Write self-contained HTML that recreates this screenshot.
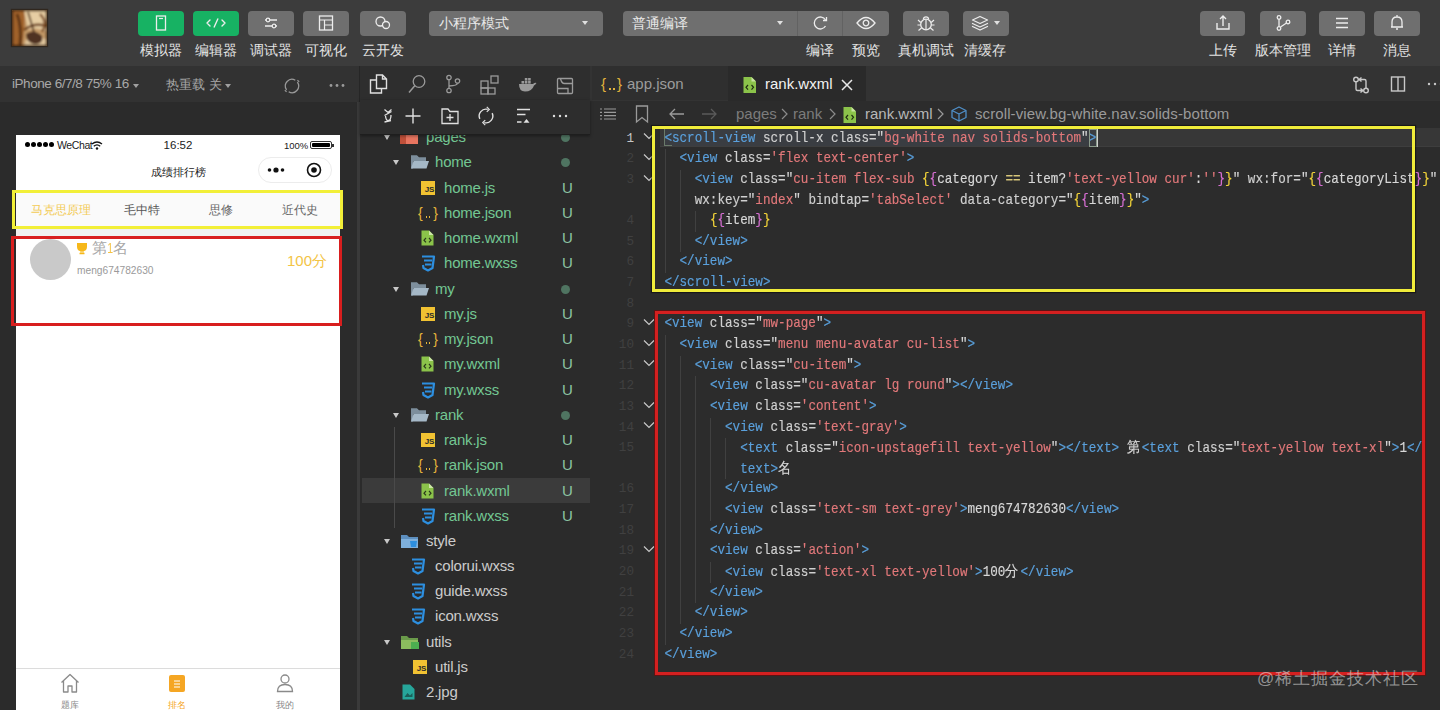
<!DOCTYPE html>
<html><head><meta charset="utf-8">
<style>
*{margin:0;padding:0;box-sizing:border-box}
html,body{width:1440px;height:710px;overflow:hidden;background:#2b2b2b;font-family:"Liberation Sans",sans-serif;position:relative}
.a{position:absolute}
svg{position:absolute;overflow:visible}
#top{left:0;top:0;width:1440px;height:66px;background:#3c3c3c}
.btn{position:absolute;top:11px;height:25px;border-radius:4px;background:#6f6f6f}
.btn.g{background:#17b263}
.lbl{position:absolute;top:41px;font-size:14px;color:#e4e4e4;white-space:nowrap;text-align:center;width:80px;line-height:18px}
.dd{position:absolute;top:11px;height:25px;border-radius:4px;background:#6f6f6f;color:#e8e8e8;font-size:14px;line-height:25px}
.tri{position:absolute;width:0;height:0;border-left:4px solid transparent;border-right:4px solid transparent;border-top:5px solid #e0e0e0}
#row2{left:0;top:66px;width:1440px;height:36px;background:#323232}
</style></head><body>
<div id="top" class="a"></div>
<div id="row2" class="a"></div>
<div class="a" style="left:12px;top:10px;width:35px;height:36px;overflow:hidden;background:#c9a273;box-shadow:0 0 1px 1px rgba(40,25,10,0.6)">
<svg width="35" height="36" style="left:0;top:0"><defs><filter id="bl"><feGaussianBlur stdDeviation="1.2"/></filter></defs><g filter="url(#bl)">
<rect x="-2" y="-2" width="39" height="40" fill="#c49a68"/>
<path d="M12 0 H36 V22 Q26 16 16 20 Z" fill="#e6cda3"/>
<path d="M14 30 Q24 24 36 30 V38 H12 Z" fill="#e2c89f"/>
<path d="M-2 0 H12 Q14 14 10 38 H-2 Z" fill="#a0622c"/>
<path d="M5 4 Q10 16 8 36" stroke="#5e3412" stroke-width="3" fill="none"/>
<path d="M14 24 Q22 18 30 26 Q32 34 22 34 Q14 32 14 24 Z" fill="#4f3120"/>
<path d="M12 20 Q22 12 34 16" stroke="#6d3f1a" stroke-width="2.5" fill="none"/>
<path d="M16 2 L22 22" stroke="#4a2a12" stroke-width="1.6" fill="none"/>
<path d="M28 4 Q36 12 30 22" stroke="#7a4a22" stroke-width="2.2" fill="none"/>
<rect x="0" y="0" width="35" height="36" fill="none" stroke="#3a2410" stroke-width="2.5"/>
</g></svg></div>
<div class="btn g" style="left:138px;width:46px"></div><svg width="1" height="1" style="left:161.0px;top:23px"><rect x="-4.5" y="-7" width="9" height="14" fill="none" stroke="#ededed" stroke-width="1.3"/><line x1="-2" y1="-4.5" x2="2" y2="-4.5" stroke="#ededed" stroke-width="1.2"/></svg><div class="lbl" style="left:121.0px">模拟器</div><div class="btn g" style="left:193px;width:46px"></div><svg width="1" height="1" style="left:216.0px;top:23px"><path d="M-6 -3 L-9 0 L-6 3 M6 -3 L9 0 L6 3 M1.8 -4 L-1.8 4" fill="none" stroke="#ededed" stroke-width="1.4" stroke-linecap="round" stroke-linejoin="round"/></svg><div class="lbl" style="left:176.0px">编辑器</div><div class="btn" style="left:248px;width:46px"></div><svg width="1" height="1" style="left:271.0px;top:23px"><path d="M-6 -3 H6 M-6 3 H6" stroke="#ededed" stroke-width="1.3"/><circle cx="-3" cy="-3" r="1.8" fill="#6f6f6f" stroke="#ededed" stroke-width="1.2"/><circle cx="3" cy="3" r="1.8" fill="#6f6f6f" stroke="#ededed" stroke-width="1.2"/></svg><div class="lbl" style="left:231.0px">调试器</div><div class="btn" style="left:303px;width:46px"></div><svg width="1" height="1" style="left:326.0px;top:23px"><rect x="-6.5" y="-7" width="13" height="14" fill="none" stroke="#ededed" stroke-width="1.3"/><path d="M-6.5 -3 H6.5 M-1.5 -3 V7 M-1.5 2 H6.5" stroke="#ededed" stroke-width="1.2" fill="none"/></svg><div class="lbl" style="left:286.0px">可视化</div><div class="btn" style="left:360px;width:46px"></div><svg width="1" height="1" style="left:383.0px;top:23px"><circle cx="-2.5" cy="-1.5" r="4.5" fill="none" stroke="#ededed" stroke-width="1.3"/><circle cx="3" cy="2" r="3.5" fill="#6f6f6f" stroke="#ededed" stroke-width="1.3"/></svg><div class="lbl" style="left:343.0px">云开发</div><div class="btn" style="left:903px;width:46px"></div><svg width="1" height="1" style="left:926.0px;top:23px"><circle cx="0" cy="1.5" r="5.3" fill="none" stroke="#ededed" stroke-width="1.3"/><path d="M-2.6 -3.6 A2.6 2.6 0 0 1 2.6 -3.6" fill="none" stroke="#ededed" stroke-width="1.3"/><path d="M0 -3.5 V6.8 M-5.2 -0.5 L-8 -3 M5.2 -0.5 L8 -3 M-5.3 2 H-8.5 M5.3 2 H8.5 M-4.5 5 L-7.5 7.5 M4.5 5 L7.5 7.5" stroke="#ededed" stroke-width="1.2" fill="none"/></svg><div class="lbl" style="left:886.0px">真机调试</div><div class="btn" style="left:1200px;width:45px"></div><svg width="1" height="1" style="left:1222.5px;top:23px"><path d="M-6 0 V6 H6 V0" fill="none" stroke="#ededed" stroke-width="1.4"/><path d="M0 3 V-7 M-3 -4 L0 -7 L3 -4" fill="none" stroke="#ededed" stroke-width="1.4"/></svg><div class="lbl" style="left:1182.5px">上传</div><div class="btn" style="left:1260px;width:46px"></div><svg width="1" height="1" style="left:1283.0px;top:23px"><circle cx="-4" cy="-5.5" r="1.8" fill="none" stroke="#ededed" stroke-width="1.3"/><circle cx="-4" cy="5.5" r="1.8" fill="none" stroke="#ededed" stroke-width="1.3"/><circle cx="5" cy="-1" r="1.8" fill="none" stroke="#ededed" stroke-width="1.3"/><path d="M-4 -3.7 V3.7 M-2.5 4 L3.5 0" stroke="#ededed" stroke-width="1.3"/></svg><div class="lbl" style="left:1243.0px">版本管理</div><div class="btn" style="left:1319px;width:46px"></div><svg width="1" height="1" style="left:1342.0px;top:23px"><path d="M-6 -4.5 H6 M-6 0 H6 M-6 4.5 H6" stroke="#ededed" stroke-width="1.3"/></svg><div class="lbl" style="left:1302.0px">详情</div><div class="btn" style="left:1374px;width:46px"></div><svg width="1" height="1" style="left:1397.0px;top:23px"><path d="M-5 4 V-1 Q-5 -6 0 -6 Q5 -6 5 -1 V4 Z M-6 4 H6 M-1 6 H1 M0 -6 V-8" fill="none" stroke="#ededed" stroke-width="1.3"/></svg><div class="lbl" style="left:1357.0px">消息</div><div class="btn" style="left:963px;width:46px"></div><svg width="1" height="1" style="left:980px;top:23px"><path d="M0 -6.5 L7.5 -3 L0 0.5 L-7.5 -3 Z" fill="none" stroke="#ededed" stroke-width="1.3" stroke-linejoin="round"/><path d="M-7.5 0.5 L0 4 L7.5 0.5 M-7.5 3.5 L0 7 L7.5 3.5" fill="none" stroke="#ededed" stroke-width="1.3" stroke-linejoin="round" stroke-linecap="round"/></svg><div class="tri" style="left:994px;top:21px;border-left-width:3px;border-right-width:3px;border-top-width:4px"></div><div class="lbl" style="left:945px">清缓存</div><div class="dd" style="left:429px;width:174px;padding-left:10px">小程序模式</div><div class="tri" style="left:582px;top:21px;border-left-width:3px;border-right-width:3px;border-top-width:4px"></div><div class="dd" style="left:623px;width:266px;padding-left:9px">普通编译</div><div class="a" style="left:797px;top:11px;width:1px;height:25px;background:#626262"></div><div class="a" style="left:842px;top:11px;width:1px;height:25px;background:#626262"></div><div class="tri" style="left:777px;top:21px;border-left-width:3px;border-right-width:3px;border-top-width:4px"></div><svg width="1" height="1" style="left:820px;top:23px"><path d="M5.5 -3 A6 6 0 1 0 5.5 3" fill="none" stroke="#ededed" stroke-width="1.3"/><path d="M6.5 -6 V-2.5 H3" fill="none" stroke="#ededed" stroke-width="1.3"/></svg><svg width="1" height="1" style="left:866px;top:23px"><path d="M-9 0 Q0 -11 9 0 Q0 11 -9 0 Z" fill="none" stroke="#ededed" stroke-width="1.3"/><circle cx="0" cy="0" r="2.8" fill="none" stroke="#ededed" stroke-width="1.3"/></svg><div class="lbl" style="left:780px">编译</div><div class="lbl" style="left:826px">预览</div><div class="a" style="left:0;top:102px;width:357px;height:608px;background:#2b2b2b"></div><div class="a" style="left:12px;top:76px;font-size:13.5px;letter-spacing:-0.45px;color:#a9a9a9;white-space:nowrap;line-height:16px">iPhone 6/7/8 75% 16</div><div class="tri" style="left:133px;top:84px;border-left-width:3px;border-right-width:3px;border-top-width:4px;border-top-color:#a0a0a0"></div><div class="a" style="left:166px;top:77px;font-size:12.8px;color:#a9a9a9;white-space:nowrap;line-height:16px">热重载 关</div><div class="tri" style="left:225px;top:84px;border-left-width:3px;border-right-width:3px;border-top-width:4px;border-top-color:#a0a0a0"></div><svg width="1" height="1" style="left:291.5px;top:85.5px"><path d="M3.30 -5.72 A6.6 6.6 0 0 0 -5.41 3.79 M-3.30 5.72 A6.6 6.6 0 0 0 5.41 -3.79" fill="none" stroke="#9a9a9a" stroke-width="1.3"/><path d="M-7.21 4.29 L-5.41 5.79 M7.21 -4.29 L5.41 -5.79" fill="none" stroke="#9a9a9a" stroke-width="1.1"/></svg><svg width="1" height="1" style="left:337px;top:85px"><circle cx="-6" cy="0.5" r="1.4" fill="#9a9a9a"/><circle cx="0" cy="0.5" r="1.4" fill="#9a9a9a"/><circle cx="6" cy="0.5" r="1.4" fill="#9a9a9a"/></svg><div class="a" style="left:357px;top:102px;width:3px;height:608px;background:#3a3a3a"></div><div class="a" style="left:359px;top:66px;width:1px;height:36px;background:#262626"></div><div class="a" style="left:360px;top:66px;width:230px;height:644px;background:#2b2b2b"></div><div class="a" style="left:360px;top:66px;width:230px;height:34px;background:#2e2e2e"></div><div class="a" style="left:360px;top:100px;width:230px;height:35px;background:#2d2d2d;border-bottom:1px solid #1e1e1e;box-shadow:0 1px 3px rgba(0,0,0,0.4);z-index:2"></div><svg width="1" height="1" style="left:379px;top:84px"><path d="M-2.5 -9 H3.5 L7.5 -5 V4.5 H-2.5 Z M3.5 -9 V-5 H7.5" fill="none" stroke="#e0e0e0" stroke-width="1.4"/><path d="M-2.5 -4 H-8.5 V9 H2.5 V4.5" fill="none" stroke="#e0e0e0" stroke-width="1.4"/></svg><svg width="1" height="1" style="left:417px;top:84px"><circle cx="2" cy="-2.5" r="5.8" fill="none" stroke="#9a9a9a" stroke-width="1.3"/><path d="M-2 1.5 L-8 8.5" stroke="#9a9a9a" stroke-width="1.5"/></svg><svg width="1" height="1" style="left:453px;top:84px"><circle cx="-4" cy="-6.5" r="2.2" fill="none" stroke="#9a9a9a" stroke-width="1.3"/><circle cx="-4" cy="6.5" r="2.2" fill="none" stroke="#9a9a9a" stroke-width="1.3"/><circle cx="4.5" cy="-3" r="2.2" fill="none" stroke="#9a9a9a" stroke-width="1.3"/><path d="M-4 -4.3 V4.3 M4.5 -0.8 Q4.5 1.5 -4 2" fill="none" stroke="#9a9a9a" stroke-width="1.3"/></svg><svg width="1" height="1" style="left:489px;top:84px"><rect x="-8" y="-3" width="7" height="7" fill="none" stroke="#9a9a9a" stroke-width="1.3"/><rect x="-8" y="4" width="7" height="6" fill="none" stroke="#9a9a9a" stroke-width="1.3"/><rect x="-1" y="4" width="7" height="6" fill="none" stroke="#9a9a9a" stroke-width="1.3"/><rect x="2" y="-8" width="7" height="7" fill="none" stroke="#9a9a9a" stroke-width="1.3"/></svg><svg width="1" height="1" style="left:526.5px;top:84.5px"><path d="M-8 -1 H6 Q8 -3 9.5 -2 Q8 0 7 0.5 Q5 6.5 -2 6.5 Q-8 6.5 -8 -1 Z" fill="#9a9a9a"/><rect x="-5.5" y="-4" width="2.6" height="2.6" fill="#9a9a9a"/><rect x="-2.2" y="-4" width="2.6" height="2.6" fill="#9a9a9a"/><rect x="1.1" y="-4" width="2.6" height="2.6" fill="#9a9a9a"/><rect x="-2.2" y="-7" width="2.6" height="2.6" fill="#9a9a9a"/><rect x="1.1" y="-7" width="2.6" height="2.6" fill="#9a9a9a"/></svg><svg width="1" height="1" style="left:565px;top:85.5px"><rect x="-7.5" y="-7.5" width="15" height="15" rx="1" fill="none" stroke="#9a9a9a" stroke-width="1.3"/><path d="M-4.5 -7.5 Q-3.5 -2.5 -0.5 -2.5 H7.5 M-7.5 2.5 H3 V7.5" fill="none" stroke="#9a9a9a" stroke-width="1.3"/></svg><svg width="1" height="1" style="left:388px;top:115.5px;z-index:3"><path d="M-3.5 -6.5 L0 -3.5 L3.5 -6.5 M-3.5 -0.5 L3.5 -4.5 M-2.5 0 Q-2 5 0.5 4.5 Q3 4 3 -1 M-3.5 6 L3 4.5" fill="none" stroke="#e0e0e0" stroke-width="1.3"/></svg><svg width="1" height="1" style="left:413px;top:115.5px;z-index:3"><path d="M-7.5 0 H7.5 M0 -7.5 V7.5" stroke="#e0e0e0" stroke-width="1.4"/></svg><svg width="1" height="1" style="left:449.5px;top:115.5px;z-index:3"><path d="M-8 -7 H-2 L0 -4.5 H8 V7.5 H-8 Z" fill="none" stroke="#e0e0e0" stroke-width="1.3"/><path d="M-3.5 1.5 H3.5 M0 -2 V5" stroke="#e0e0e0" stroke-width="1.3"/></svg><svg width="1" height="1" style="left:486px;top:115.5px;z-index:3"><path d="M1.76 -6.57 A6.8 6.8 0 0 0 -6.16 2.87 M-1.76 6.57 A6.8 6.8 0 0 0 6.16 -2.87" fill="none" stroke="#e0e0e0" stroke-width="1.4"/><path d="M0.76 -9.07 L3.26 -6.57 L0.76 -4.07 M-0.76 4.07 L-3.26 6.57 L-0.76 9.07" fill="none" stroke="#e0e0e0" stroke-width="1.2"/></svg><svg width="1" height="1" style="left:522.5px;top:115.5px;z-index:3"><path d="M-6 -6.5 H7 M-6 -1.5 H2.5 M-6 6 H-1.5" stroke="#e0e0e0" stroke-width="1.3"/><path d="M0.5 6.8 L3.5 3 L6.5 6.8 Z" fill="#e0e0e0"/></svg><svg width="1" height="1" style="left:559.5px;top:115.5px;z-index:3"><circle cx="-6" cy="0" r="1.2" fill="#e0e0e0"/><circle cx="0" cy="0" r="1.2" fill="#e0e0e0"/><circle cx="6" cy="0" r="1.2" fill="#e0e0e0"/></svg><div class="a" style="left:362px;top:477.5px;width:228px;height:25.5px;background:#3b3b3b"></div><div class="a" style="left:394px;top:427px;width:1px;height:101px;background:#4a4a4a"></div><div class="tri" style="left:384px;top:135px;border-left-width:3.5px;border-right-width:3.5px;border-top-width:5px;border-top-color:#c8c8c8"></div><svg width="1" height="1" style="left:400px;top:137px"><path d="M0 -6 H6 L8 -4 H18 V7 H0 Z" fill="#c0503a"/><rect x="6" y="-2" width="12" height="9" fill="#e87560"/></svg><div class="a" style="left:426px;top:127px;font-size:15px;letter-spacing:-0.2px;line-height:20px;color:#73c793;white-space:nowrap">pages</div><div class="a" style="left:561px;top:132.5px;width:9px;height:9px;border-radius:5px;background:#4f7461"></div><div class="tri" style="left:393px;top:160px;border-left-width:3.5px;border-right-width:3.5px;border-top-width:5px;border-top-color:#c8c8c8"></div><svg width="1" height="1" style="left:411px;top:162px"><path d="M0 -6.5 H6 L8 -4.5 H15 V-1 H0 Z" fill="#7d8e9c"/><path d="M0 -6.5 V6.5 H2 V-1.5 H15 V-4.5 H8 L6 -6.5 Z" fill="#7d8e9c"/><path d="M2.5 -1 H18 L15.5 6.5 H0 Z" fill="#a5b8c7"/></svg><div class="a" style="left:435px;top:152px;font-size:15px;letter-spacing:-0.2px;line-height:20px;color:#73c793;white-space:nowrap">home</div><div class="a" style="left:561px;top:157.5px;width:9px;height:9px;border-radius:5px;background:#4f7461"></div><div class="a" style="left:421px;top:180.5px;width:14px;height:14px;background:#f1c232;font-size:8px;font-weight:bold;color:#2a2a2a;line-height:18px;text-align:right;padding-right:1px;letter-spacing:-0.3px;font-family:Liberation Sans">JS</div><div class="a" style="left:444px;top:177.5px;font-size:15px;letter-spacing:-0.2px;line-height:20px;color:#73c793;white-space:nowrap">home.js</div><div class="a" style="left:562px;top:177.5px;font-size:15px;line-height:20px;color:#8cc3a2">U</div><div class="a" style="left:418px;top:204px;width:20px;height:18px;font-size:14px;color:#e5b53b;line-height:18px;white-space:nowrap;display:flex;justify-content:space-between"><span>{</span><span>}</span></div><div class="a" style="left:425.5px;top:216px;width:1.6px;height:1.6px;background:#e5b53b"></div><div class="a" style="left:428.5px;top:216px;width:1.6px;height:1.6px;background:#e5b53b"></div><div class="a" style="left:444px;top:203px;font-size:15px;letter-spacing:-0.2px;line-height:20px;color:#73c793;white-space:nowrap">home.json</div><div class="a" style="left:562px;top:203px;font-size:15px;line-height:20px;color:#8cc3a2">U</div><svg width="1" height="1" style="left:421px;top:238px"><path d="M0.5 -7.5 H8 L12.5 -3 V7.5 H0.5 Z" fill="#8bc34a"/><path d="M8 -7.5 V-3 H12.5" fill="#cde6a8"/><path d="M5 0 L3 2.2 L5 4.4 M8 0 L10 2.2 L8 4.4" fill="none" stroke="#2a3a1a" stroke-width="1.2"/></svg><div class="a" style="left:444px;top:228px;font-size:15px;letter-spacing:-0.2px;line-height:20px;color:#73c793;white-space:nowrap">home.wxml</div><div class="a" style="left:562px;top:228px;font-size:15px;line-height:20px;color:#8cc3a2">U</div><svg width="1" height="1" style="left:421px;top:263px"><path d="M1 -6.5 H13 L11.5 5 L7 7.5 L2.5 5 L2 2" fill="none" stroke="#2d8fe0" stroke-width="2.2" stroke-linejoin="round"/><path d="M3 -2.5 H11 M4 1.5 H10.5" stroke="#2d8fe0" stroke-width="2"/></svg><div class="a" style="left:444px;top:253px;font-size:15px;letter-spacing:-0.2px;line-height:20px;color:#73c793;white-space:nowrap">home.wxss</div><div class="a" style="left:562px;top:253px;font-size:15px;line-height:20px;color:#8cc3a2">U</div><div class="tri" style="left:393px;top:287px;border-left-width:3.5px;border-right-width:3.5px;border-top-width:5px;border-top-color:#c8c8c8"></div><svg width="1" height="1" style="left:411px;top:289px"><path d="M0 -6.5 H6 L8 -4.5 H15 V-1 H0 Z" fill="#7d8e9c"/><path d="M0 -6.5 V6.5 H2 V-1.5 H15 V-4.5 H8 L6 -6.5 Z" fill="#7d8e9c"/><path d="M2.5 -1 H18 L15.5 6.5 H0 Z" fill="#a5b8c7"/></svg><div class="a" style="left:435px;top:279px;font-size:15px;letter-spacing:-0.2px;line-height:20px;color:#73c793;white-space:nowrap">my</div><div class="a" style="left:561px;top:284.5px;width:9px;height:9px;border-radius:5px;background:#4f7461"></div><div class="a" style="left:421px;top:307px;width:14px;height:14px;background:#f1c232;font-size:8px;font-weight:bold;color:#2a2a2a;line-height:18px;text-align:right;padding-right:1px;letter-spacing:-0.3px;font-family:Liberation Sans">JS</div><div class="a" style="left:444px;top:304px;font-size:15px;letter-spacing:-0.2px;line-height:20px;color:#73c793;white-space:nowrap">my.js</div><div class="a" style="left:562px;top:304px;font-size:15px;line-height:20px;color:#8cc3a2">U</div><div class="a" style="left:418px;top:330px;width:20px;height:18px;font-size:14px;color:#e5b53b;line-height:18px;white-space:nowrap;display:flex;justify-content:space-between"><span>{</span><span>}</span></div><div class="a" style="left:425.5px;top:342px;width:1.6px;height:1.6px;background:#e5b53b"></div><div class="a" style="left:428.5px;top:342px;width:1.6px;height:1.6px;background:#e5b53b"></div><div class="a" style="left:444px;top:329px;font-size:15px;letter-spacing:-0.2px;line-height:20px;color:#73c793;white-space:nowrap">my.json</div><div class="a" style="left:562px;top:329px;font-size:15px;line-height:20px;color:#8cc3a2">U</div><svg width="1" height="1" style="left:421px;top:364px"><path d="M0.5 -7.5 H8 L12.5 -3 V7.5 H0.5 Z" fill="#8bc34a"/><path d="M8 -7.5 V-3 H12.5" fill="#cde6a8"/><path d="M5 0 L3 2.2 L5 4.4 M8 0 L10 2.2 L8 4.4" fill="none" stroke="#2a3a1a" stroke-width="1.2"/></svg><div class="a" style="left:444px;top:354px;font-size:15px;letter-spacing:-0.2px;line-height:20px;color:#73c793;white-space:nowrap">my.wxml</div><div class="a" style="left:562px;top:354px;font-size:15px;line-height:20px;color:#8cc3a2">U</div><svg width="1" height="1" style="left:421px;top:390px"><path d="M1 -6.5 H13 L11.5 5 L7 7.5 L2.5 5 L2 2" fill="none" stroke="#2d8fe0" stroke-width="2.2" stroke-linejoin="round"/><path d="M3 -2.5 H11 M4 1.5 H10.5" stroke="#2d8fe0" stroke-width="2"/></svg><div class="a" style="left:444px;top:380px;font-size:15px;letter-spacing:-0.2px;line-height:20px;color:#73c793;white-space:nowrap">my.wxss</div><div class="a" style="left:562px;top:380px;font-size:15px;line-height:20px;color:#8cc3a2">U</div><div class="tri" style="left:393px;top:413px;border-left-width:3.5px;border-right-width:3.5px;border-top-width:5px;border-top-color:#c8c8c8"></div><svg width="1" height="1" style="left:411px;top:415px"><path d="M0 -6.5 H6 L8 -4.5 H15 V-1 H0 Z" fill="#7d8e9c"/><path d="M0 -6.5 V6.5 H2 V-1.5 H15 V-4.5 H8 L6 -6.5 Z" fill="#7d8e9c"/><path d="M2.5 -1 H18 L15.5 6.5 H0 Z" fill="#a5b8c7"/></svg><div class="a" style="left:435px;top:405px;font-size:15px;letter-spacing:-0.2px;line-height:20px;color:#73c793;white-space:nowrap">rank</div><div class="a" style="left:561px;top:410.5px;width:9px;height:9px;border-radius:5px;background:#4f7461"></div><div class="a" style="left:421px;top:433px;width:14px;height:14px;background:#f1c232;font-size:8px;font-weight:bold;color:#2a2a2a;line-height:18px;text-align:right;padding-right:1px;letter-spacing:-0.3px;font-family:Liberation Sans">JS</div><div class="a" style="left:444px;top:430px;font-size:15px;letter-spacing:-0.2px;line-height:20px;color:#73c793;white-space:nowrap">rank.js</div><div class="a" style="left:562px;top:430px;font-size:15px;line-height:20px;color:#8cc3a2">U</div><div class="a" style="left:418px;top:456px;width:20px;height:18px;font-size:14px;color:#e5b53b;line-height:18px;white-space:nowrap;display:flex;justify-content:space-between"><span>{</span><span>}</span></div><div class="a" style="left:425.5px;top:468px;width:1.6px;height:1.6px;background:#e5b53b"></div><div class="a" style="left:428.5px;top:468px;width:1.6px;height:1.6px;background:#e5b53b"></div><div class="a" style="left:444px;top:455px;font-size:15px;letter-spacing:-0.2px;line-height:20px;color:#73c793;white-space:nowrap">rank.json</div><div class="a" style="left:562px;top:455px;font-size:15px;line-height:20px;color:#8cc3a2">U</div><svg width="1" height="1" style="left:421px;top:490.5px"><path d="M0.5 -7.5 H8 L12.5 -3 V7.5 H0.5 Z" fill="#8bc34a"/><path d="M8 -7.5 V-3 H12.5" fill="#cde6a8"/><path d="M5 0 L3 2.2 L5 4.4 M8 0 L10 2.2 L8 4.4" fill="none" stroke="#2a3a1a" stroke-width="1.2"/></svg><div class="a" style="left:444px;top:480.5px;font-size:15px;letter-spacing:-0.2px;line-height:20px;color:#73c793;white-space:nowrap">rank.wxml</div><div class="a" style="left:562px;top:480.5px;font-size:15px;line-height:20px;color:#8cc3a2">U</div><svg width="1" height="1" style="left:421px;top:516px"><path d="M1 -6.5 H13 L11.5 5 L7 7.5 L2.5 5 L2 2" fill="none" stroke="#2d8fe0" stroke-width="2.2" stroke-linejoin="round"/><path d="M3 -2.5 H11 M4 1.5 H10.5" stroke="#2d8fe0" stroke-width="2"/></svg><div class="a" style="left:444px;top:506px;font-size:15px;letter-spacing:-0.2px;line-height:20px;color:#73c793;white-space:nowrap">rank.wxss</div><div class="a" style="left:562px;top:506px;font-size:15px;line-height:20px;color:#8cc3a2">U</div><div class="tri" style="left:384px;top:539px;border-left-width:3.5px;border-right-width:3.5px;border-top-width:5px;border-top-color:#c8c8c8"></div><svg width="1" height="1" style="left:401px;top:541px"><path d="M0 -6 H6 L8 -4 H17 V7 H0 Z" fill="#5d8fbf"/><path d="M0 -2 H17 V7 H0 Z" fill="#7fb0dc"/><path d="M9 0 H16 L15 6 H10 Z" fill="#2d8fe0"/></svg><div class="a" style="left:426px;top:531px;font-size:15px;letter-spacing:-0.2px;line-height:20px;color:#cccccc;white-space:nowrap">style</div><svg width="1" height="1" style="left:411px;top:566px"><path d="M1 -6.5 H13 L11.5 5 L7 7.5 L2.5 5 L2 2" fill="none" stroke="#2d8fe0" stroke-width="2.2" stroke-linejoin="round"/><path d="M3 -2.5 H11 M4 1.5 H10.5" stroke="#2d8fe0" stroke-width="2"/></svg><div class="a" style="left:435px;top:556px;font-size:15px;letter-spacing:-0.2px;line-height:20px;color:#cccccc;white-space:nowrap">colorui.wxss</div><svg width="1" height="1" style="left:411px;top:591px"><path d="M1 -6.5 H13 L11.5 5 L7 7.5 L2.5 5 L2 2" fill="none" stroke="#2d8fe0" stroke-width="2.2" stroke-linejoin="round"/><path d="M3 -2.5 H11 M4 1.5 H10.5" stroke="#2d8fe0" stroke-width="2"/></svg><div class="a" style="left:435px;top:581px;font-size:15px;letter-spacing:-0.2px;line-height:20px;color:#cccccc;white-space:nowrap">guide.wxss</div><svg width="1" height="1" style="left:411px;top:616px"><path d="M1 -6.5 H13 L11.5 5 L7 7.5 L2.5 5 L2 2" fill="none" stroke="#2d8fe0" stroke-width="2.2" stroke-linejoin="round"/><path d="M3 -2.5 H11 M4 1.5 H10.5" stroke="#2d8fe0" stroke-width="2"/></svg><div class="a" style="left:435px;top:606px;font-size:15px;letter-spacing:-0.2px;line-height:20px;color:#cccccc;white-space:nowrap">icon.wxss</div><div class="tri" style="left:384px;top:640px;border-left-width:3.5px;border-right-width:3.5px;border-top-width:5px;border-top-color:#c8c8c8"></div><svg width="1" height="1" style="left:401px;top:642px"><path d="M0 -6 H6 L8 -4 H17 V7 H0 Z" fill="#6a9a4a"/><path d="M0 -2 H17 V7 H0 Z" fill="#8bbd5e"/><rect x="10" y="0" width="8" height="7" fill="#4caf50"/></svg><div class="a" style="left:426px;top:632px;font-size:15px;letter-spacing:-0.2px;line-height:20px;color:#cccccc;white-space:nowrap">utils</div><div class="a" style="left:413px;top:660px;width:14px;height:14px;background:#f1c232;font-size:8px;font-weight:bold;color:#2a2a2a;line-height:18px;text-align:right;padding-right:1px;letter-spacing:-0.3px;font-family:Liberation Sans">JS</div><div class="a" style="left:435px;top:657px;font-size:15px;letter-spacing:-0.2px;line-height:20px;color:#cccccc;white-space:nowrap">util.js</div><svg width="1" height="1" style="left:402px;top:692px"><path d="M0.5 -7.5 H8 L12.5 -3 V7.5 H0.5 Z" fill="#26a69a"/><path d="M2.5 5 L5.5 1 L8 3.5 L10.5 1 V5 Z" fill="#1a5f58"/></svg><div class="a" style="left:426px;top:682px;font-size:15px;letter-spacing:-0.2px;line-height:20px;color:#cccccc;white-space:nowrap">2.jpg</div><div class="a" style="left:16px;top:135px;width:324px;height:575px;background:#fff"></div><div class="a" style="left:25px;top:142px;width:5px;height:5px;border-radius:3px;background:#000"></div><div class="a" style="left:31px;top:142px;width:5px;height:5px;border-radius:3px;background:#000"></div><div class="a" style="left:37px;top:142px;width:5px;height:5px;border-radius:3px;background:#000"></div><div class="a" style="left:43px;top:142px;width:5px;height:5px;border-radius:3px;background:#000"></div><div class="a" style="left:49px;top:142px;width:5px;height:5px;border-radius:3px;background:#000"></div><div class="a" style="left:57px;top:138px;font-size:10.5px;line-height:14px;color:#222;letter-spacing:-0.4px">WeChat</div><svg width="1" height="1" style="left:97px;top:149px"><path d="M-5 -5 Q0 -9 5 -5" fill="none" stroke="#111" stroke-width="1.3"/><path d="M-3.2 -2.8 Q0 -5.5 3.2 -2.8" fill="none" stroke="#111" stroke-width="1.3"/><circle cx="0" cy="-0.5" r="1.2" fill="#111"/></svg><div class="a" style="left:16px;width:324px;top:138px;text-align:center;font-size:11.5px;line-height:14px;color:#222">16:52</div><div class="a" style="left:284px;top:140px;font-size:9.5px;line-height:11px;color:#222">100%</div><div class="a" style="left:310px;top:141px;width:22px;height:8px;border:1px solid #333;border-radius:2px;padding:1px"><div style="width:100%;height:100%;background:#000;border-radius:1px"></div></div><div class="a" style="left:332px;top:143.5px;width:2px;height:3px;background:#333"></div><div class="a" style="left:16px;width:324px;top:164px;text-align:center;font-size:11.3px;line-height:16px;color:#222">成绩排行榜</div><div class="a" style="left:258px;top:157px;width:74px;height:26px;border:1px solid #ececec;border-radius:13px;background:#fff"></div><svg width="1" height="1" style="left:276px;top:169.5px"><circle cx="-6.5" cy="0" r="1.8" fill="#111"/><circle cx="0" cy="0" r="2.6" fill="#111"/><circle cx="6.5" cy="0" r="1.8" fill="#111"/></svg><svg width="1" height="1" style="left:314px;top:169.5px"><circle cx="0" cy="0" r="6.5" fill="none" stroke="#111" stroke-width="1.6"/><circle cx="0" cy="0" r="2.8" fill="#111"/></svg><div class="a" style="left:16px;top:190px;width:324px;height:40px;background:#fafafa"></div><div class="a" style="left:16px;top:228px;width:324px;height:9px;background:#f0f0f0"></div><div class="a" style="left:11px;width:99px;text-align:center;top:200.5px;font-size:12.2px;line-height:18px;color:#f3cb55;white-space:nowrap">马克思原理</div><div class="a" style="left:104px;width:76px;text-align:center;top:200.5px;font-size:12.2px;line-height:18px;color:#555;white-space:nowrap">毛中特</div><div class="a" style="left:189px;width:64px;text-align:center;top:200.5px;font-size:12.2px;line-height:18px;color:#666;white-space:nowrap">思修</div><div class="a" style="left:262px;width:76px;text-align:center;top:200.5px;font-size:12.2px;line-height:18px;color:#666;white-space:nowrap">近代史</div><div class="a" style="left:12px;top:190px;width:331px;height:39px;border:3px solid #f2ef38"></div><div class="a" style="left:16px;top:237px;width:324px;height:88px;background:#fff"></div><div class="a" style="left:30px;top:239px;width:41px;height:41px;border-radius:50%;background:#c9c9c9"></div><svg width="1" height="1" style="left:82px;top:248px"><path d="M-5 -5 H5 V-1 Q5 3 0 3.5 Q-5 3 -5 -1 Z" fill="#f6b81a"/><path d="M-2.5 5.5 H2.5" stroke="#f6b81a" stroke-width="1.5"/><path d="M-1 3 V5 M1 3 V5" stroke="#f6b81a" stroke-width="1"/></svg><div class="a" style="left:92px;top:239px;font-size:15px;line-height:18px;color:#a8a8a8;white-space:nowrap">第<span style="color:#f5c242;font-size:15px;display:inline-block;transform:scaleX(0.7);margin:0 -1px">1</span>名</div><div class="a" style="left:77px;top:263.5px;font-size:10.2px;line-height:14px;color:#9a9a9a;white-space:nowrap">meng674782630</div><div class="a" style="left:287px;top:251px;font-size:15px;line-height:19px;color:#f3c445;white-space:nowrap">100分</div><div class="a" style="left:11px;top:236px;width:331px;height:90px;border:3px solid #d81e1e"></div><div class="a" style="left:16px;top:668px;width:324px;height:1px;background:#dcdcdc"></div><svg width="1" height="1" style="left:70px;top:683px"><path d="M-8.5 -0.5 L0 -8.5 L8.5 -0.5 M-6.5 -2 V9 H-2 V3 H2 V9 H6.5 V-2" fill="none" stroke="#8a8a8a" stroke-width="1.3" stroke-linejoin="round"/></svg><div class="a" style="left:169px;top:675px;width:16px;height:17px;border-radius:2px;background:#f5a623"></div><svg width="1" height="1" style="left:177px;top:683.5px"><path d="M-3 -3 H3 M-3 0 H3 M-3 3 H3" stroke="#fff" stroke-width="1.1"/></svg><svg width="1" height="1" style="left:285px;top:683px"><circle cx="0" cy="-4" r="4" fill="none" stroke="#8a8a8a" stroke-width="1.3"/><path d="M-7.5 8.5 Q-7.5 1.5 0 1.5 Q7.5 1.5 7.5 8.5 Z" fill="none" stroke="#8a8a8a" stroke-width="1.3"/></svg><div class="a" style="left:50px;width:40px;text-align:center;top:698.5px;font-size:9px;line-height:12px;color:#888">题库</div><div class="a" style="left:157px;width:40px;text-align:center;top:698.5px;font-size:9px;line-height:12px;color:#f5a623">排名</div><div class="a" style="left:265px;width:40px;text-align:center;top:698.5px;font-size:9px;line-height:12px;color:#888">我的</div><style>
.code{position:absolute;left:0;font-family:"Liberation Mono",monospace;font-size:12.63px;line-height:20.64px;white-space:pre;height:20.64px;transform:scaleY(1.14);transform-origin:0 55%;-webkit-text-stroke:0.15px currentColor}
.cj{display:inline-block;width:15.16px;font-family:"Liberation Sans",sans-serif;font-size:13.5px;text-align:left}
.ln{position:absolute;width:40px;text-align:right;font-family:"Liberation Mono",monospace;font-size:12.63px;line-height:20.64px;color:#4e4e4e}
.ig{position:absolute;width:1px;background:#404040}
</style><div class="a" style="left:590px;top:101px;width:850px;height:609px;background:#2c2c2c"></div><div class="a" style="left:590px;top:66px;width:850px;height:35px;background:#333333"></div><div class="a" style="left:592px;top:66px;width:136px;height:34px;background:#2f2f2f"></div><div class="a" style="left:728px;top:66px;width:138px;height:35px;background:#2a2a2a"></div><div class="a" style="left:601px;top:74px;width:21px;height:20px;font-size:15px;line-height:20px;color:#e2b33c;white-space:nowrap;display:flex;justify-content:space-between"><span>{</span><span>}</span></div><div class="a" style="left:609px;top:88px;width:2px;height:2px;background:#e2b33c"></div><div class="a" style="left:612.5px;top:88px;width:2px;height:2px;background:#e2b33c"></div><div class="a" style="left:627px;top:74px;font-size:15px;line-height:20px;color:#9c9c9c">app.json</div><svg width="1" height="1" style="left:743px;top:84.5px"><path d="M0.5 -8 H8.5 L13 -3.5 V8 H0.5 Z" fill="#8bc34a"/><path d="M8.5 -8 V-3.5 H13" fill="#c8e29f"/><path d="M5 0 L3 2.3 L5 4.6 M8.5 0 L10.5 2.3 L8.5 4.6" fill="none" stroke="#1f2d12" stroke-width="1.2"/></svg><div class="a" style="left:765px;top:74px;font-size:15px;line-height:20px;color:#f2f2f2">rank.wxml</div><svg width="1" height="1" style="left:847px;top:84.5px"><path d="M-5 -5 L5 5 M5 -5 L-5 5" stroke="#e8e8e8" stroke-width="1.5"/></svg><svg width="1" height="1" style="left:1361px;top:84.5px"><circle cx="-5" cy="-5.5" r="2.3" fill="none" stroke="#c8c8c8" stroke-width="1.4"/><circle cx="5" cy="5.5" r="2.3" fill="none" stroke="#c8c8c8" stroke-width="1.4"/><path d="M-5 -3 V4 Q-5 5.5 -3.5 5.5 H1.5 M-0.5 3.5 L2 5.5 L-0.5 7.5 M5 3 V-4 Q5 -5.5 3.5 -5.5 H-1.5 M0.5 -7.5 L-2 -5.5 L0.5 -3.5" fill="none" stroke="#c8c8c8" stroke-width="1.4"/></svg><svg width="1" height="1" style="left:1398px;top:84px"><rect x="-6.5" y="-7" width="13" height="14" fill="none" stroke="#c8c8c8" stroke-width="1.4"/><path d="M0 -7 V7" stroke="#c8c8c8" stroke-width="1.4"/></svg><svg width="1" height="1" style="left:1432px;top:84px"><circle cx="-3" cy="0" r="1.2" fill="#c8c8c8"/><circle cx="3" cy="0" r="1.2" fill="#c8c8c8"/><circle cx="9" cy="0" r="1.2" fill="#c8c8c8"/></svg><svg width="1" height="1" style="left:608px;top:114px"><path d="M-4 -5 H8 M-4 -1.7 H8 M-4 1.7 H8 M-4 5 H8" stroke="#9a9a9a" stroke-width="1.2"/><path d="M-8 -5 H-6 M-8 -1.7 H-6 M-8 1.7 H-6 M-8 5 H-6" stroke="#9a9a9a" stroke-width="1.2"/></svg><svg width="1" height="1" style="left:642px;top:114px"><path d="M-5.5 -8 H5.5 V8 L0 3.5 L-5.5 8 Z" fill="none" stroke="#9a9a9a" stroke-width="1.3"/></svg><svg width="1" height="1" style="left:677px;top:114px"><path d="M-7 0 H7 M-2 -5 L-7 0 L-2 5" fill="none" stroke="#9a9a9a" stroke-width="1.3"/></svg><svg width="1" height="1" style="left:709px;top:114px"><path d="M-7 0 H7 M2 -5 L7 0 L2 5" fill="none" stroke="#5a5a5a" stroke-width="1.3"/></svg><div class="a" style="left:736px;top:104px;font-size:15px;line-height:20px;color:#7c7c7c;white-space:nowrap">pages</div><svg width="1" height="1" style="left:784px;top:114px"><path d="M-2 -5 L3 0 L-2 5" fill="none" stroke="#8c8c8c" stroke-width="1.2"/></svg><div class="a" style="left:793px;top:104px;font-size:15px;line-height:20px;color:#7c7c7c;white-space:nowrap">rank</div><svg width="1" height="1" style="left:832px;top:114px"><path d="M-2 -5 L3 0 L-2 5" fill="none" stroke="#8c8c8c" stroke-width="1.2"/></svg><svg width="1" height="1" style="left:843px;top:114.5px"><path d="M0.5 -8 H8.5 L13 -3.5 V8 H0.5 Z" fill="#8bc34a"/><path d="M8.5 -8 V-3.5 H13" fill="#c8e29f"/><path d="M5 0 L3 2.3 L5 4.6 M8.5 0 L10.5 2.3 L8.5 4.6" fill="none" stroke="#1f2d12" stroke-width="1.2"/></svg><div class="a" style="left:865px;top:104px;font-size:15px;line-height:20px;color:#b8b8b8;white-space:nowrap">rank.wxml</div><svg width="1" height="1" style="left:940px;top:114px"><path d="M-2 -5 L3 0 L-2 5" fill="none" stroke="#9a9a9a" stroke-width="1.2"/></svg><svg width="1" height="1" style="left:958.5px;top:114px"><path d="M0 -7 L7 -3.5 V3.5 L0 7 L-7 3.5 V-3.5 Z M-7 -3.5 L0 0 L7 -3.5 M0 0 V7" fill="none" stroke="#4f8fc8" stroke-width="1.3" stroke-linejoin="round"/></svg><div class="a" style="left:975px;top:104px;font-size:15px;letter-spacing:0.1px;line-height:20px;color:#9a9a9a;white-space:nowrap">scroll-view.bg-white.nav.solids-bottom</div><div class="a" style="left:660px;top:128px;width:780px;height:19px;background:#373737;border-bottom:1px solid #3e3e3e"></div><div class="a" style="left:664.4px;top:129px;width:432.1px;height:17px;background:#3a3d42"></div><div class="ig" style="left:664.7px;top:149.2px;height:123.8px"></div><div class="ig" style="left:664.7px;top:335.0px;height:309.6px"></div><div class="ig" style="left:679.9px;top:169.9px;height:82.6px"></div><div class="ig" style="left:679.9px;top:355.6px;height:268.3px"></div><div class="ig" style="left:695.0px;top:211.2px;height:20.6px"></div><div class="ig" style="left:695.0px;top:376.3px;height:227.0px"></div><div class="ig" style="left:710.2px;top:417.6px;height:103.2px"></div><div class="ig" style="left:710.2px;top:562.0px;height:20.6px"></div><div class="ig" style="left:725.3px;top:438.2px;height:41.3px"></div><div class="ln" style="left:594px;top:128.60px;color:#c6c6c6">1</div><svg width="1" height="1" style="left:649px;top:136.40px"><path d="M-5 -2.5 L0 2.5 L5 -2.5" fill="none" stroke="#c8c8c8" stroke-width="1.2"/></svg><div class="code" style="left:664.40px;top:128.60px"><span style="color:#5aa0dc">&lt;scroll-view</span><span style="color:#d0d0d0"> scroll-x class=</span><span style="color:#d8d8d8">&quot;</span><span style="color:#e2787a">bg-white nav solids-bottom</span><span style="color:#d8d8d8">&quot;</span><span style="color:#5aa0dc">&gt;</span></div><div class="ln" style="left:594px;top:149.24px;color:#404040">2</div><svg width="1" height="1" style="left:649px;top:157.04px"><path d="M-5 -2.5 L0 2.5 L5 -2.5" fill="none" stroke="#c8c8c8" stroke-width="1.2"/></svg><div class="code" style="left:679.56px;top:149.24px"><span style="color:#5aa0dc">&lt;view</span><span style="color:#d0d0d0"> class=</span><span style="color:#e2787a">&#x27;flex text-center&#x27;</span><span style="color:#5aa0dc">&gt;</span></div><div class="ln" style="left:594px;top:169.88px;color:#404040">3</div><svg width="1" height="1" style="left:649px;top:177.68px"><path d="M-5 -2.5 L0 2.5 L5 -2.5" fill="none" stroke="#c8c8c8" stroke-width="1.2"/></svg><div class="code" style="left:694.72px;top:169.88px"><span style="color:#5aa0dc">&lt;view</span><span style="color:#d0d0d0"> class=</span><span style="color:#d8d8d8">&quot;</span><span style="color:#e2787a">cu-item flex-sub </span><span style="color:#f2d339">{</span><span style="color:#d870d4">{</span><span style="color:#d8d8d8">category </span><span style="color:#d8c87a">==</span><span style="color:#d8d8d8"> item?</span><span style="color:#e2787a">&#x27;text-yellow cur&#x27;</span><span style="color:#d8d8d8">:</span><span style="color:#e2787a">&#x27;&#x27;</span><span style="color:#d870d4">}</span><span style="color:#f2d339">}</span><span style="color:#d8d8d8">&quot;</span><span style="color:#d0d0d0"> wx:for=</span><span style="color:#d8d8d8">&quot;</span><span style="color:#f2d339">{</span><span style="color:#d870d4">{</span><span style="color:#d8d8d8">categoryList</span><span style="color:#d870d4">}</span><span style="color:#f2d339">}</span><span style="color:#d8d8d8">&quot;</span></div><div class="code" style="left:694.72px;top:190.52px"><span style="color:#d0d0d0">wx:key=</span><span style="color:#d8d8d8">&quot;</span><span style="color:#e2787a">index</span><span style="color:#d8d8d8">&quot;</span><span style="color:#d0d0d0"> bindtap=</span><span style="color:#e2787a">&#x27;tabSelect&#x27;</span><span style="color:#d0d0d0"> data-category=</span><span style="color:#d8d8d8">&quot;</span><span style="color:#f2d339">{</span><span style="color:#d870d4">{</span><span style="color:#d8d8d8">item</span><span style="color:#d870d4">}</span><span style="color:#f2d339">}</span><span style="color:#d8d8d8">&quot;</span><span style="color:#5aa0dc">&gt;</span></div><div class="ln" style="left:594px;top:211.16px;color:#404040">4</div><div class="code" style="left:709.88px;top:211.16px"><span style="color:#f2d339">{</span><span style="color:#d870d4">{</span><span style="color:#d8d8d8">item</span><span style="color:#d870d4">}</span><span style="color:#f2d339">}</span></div><div class="ln" style="left:594px;top:231.80px;color:#404040">5</div><div class="code" style="left:694.72px;top:231.80px"><span style="color:#5aa0dc">&lt;/view&gt;</span></div><div class="ln" style="left:594px;top:252.44px;color:#404040">6</div><div class="code" style="left:679.56px;top:252.44px"><span style="color:#5aa0dc">&lt;/view&gt;</span></div><div class="ln" style="left:594px;top:273.08px;color:#404040">7</div><div class="code" style="left:664.40px;top:273.08px"><span style="color:#5aa0dc">&lt;/scroll-view&gt;</span></div><div class="ln" style="left:594px;top:293.72px;color:#404040">8</div><div class="ln" style="left:594px;top:314.36px;color:#404040">9</div><svg width="1" height="1" style="left:649px;top:322.16px"><path d="M-5 -2.5 L0 2.5 L5 -2.5" fill="none" stroke="#c8c8c8" stroke-width="1.2"/></svg><div class="code" style="left:664.40px;top:314.36px"><span style="color:#5aa0dc">&lt;view</span><span style="color:#d0d0d0"> class=</span><span style="color:#d8d8d8">&quot;</span><span style="color:#e2787a">mw-page</span><span style="color:#d8d8d8">&quot;</span><span style="color:#5aa0dc">&gt;</span></div><div class="ln" style="left:594px;top:335.00px;color:#404040">10</div><svg width="1" height="1" style="left:649px;top:342.80px"><path d="M-5 -2.5 L0 2.5 L5 -2.5" fill="none" stroke="#c8c8c8" stroke-width="1.2"/></svg><div class="code" style="left:679.56px;top:335.00px"><span style="color:#5aa0dc">&lt;view</span><span style="color:#d0d0d0"> class=</span><span style="color:#d8d8d8">&quot;</span><span style="color:#e2787a">menu menu-avatar cu-list</span><span style="color:#d8d8d8">&quot;</span><span style="color:#5aa0dc">&gt;</span></div><div class="ln" style="left:594px;top:355.64px;color:#404040">11</div><svg width="1" height="1" style="left:649px;top:363.44px"><path d="M-5 -2.5 L0 2.5 L5 -2.5" fill="none" stroke="#c8c8c8" stroke-width="1.2"/></svg><div class="code" style="left:694.72px;top:355.64px"><span style="color:#5aa0dc">&lt;view</span><span style="color:#d0d0d0"> class=</span><span style="color:#d8d8d8">&quot;</span><span style="color:#e2787a">cu-item</span><span style="color:#d8d8d8">&quot;</span><span style="color:#5aa0dc">&gt;</span></div><div class="ln" style="left:594px;top:376.28px;color:#404040">12</div><div class="code" style="left:709.88px;top:376.28px"><span style="color:#5aa0dc">&lt;view</span><span style="color:#d0d0d0"> class=</span><span style="color:#d8d8d8">&quot;</span><span style="color:#e2787a">cu-avatar lg round</span><span style="color:#d8d8d8">&quot;</span><span style="color:#5aa0dc">&gt;&lt;/view&gt;</span></div><div class="ln" style="left:594px;top:396.92px;color:#404040">13</div><svg width="1" height="1" style="left:649px;top:404.72px"><path d="M-5 -2.5 L0 2.5 L5 -2.5" fill="none" stroke="#c8c8c8" stroke-width="1.2"/></svg><div class="code" style="left:709.88px;top:396.92px"><span style="color:#5aa0dc">&lt;view</span><span style="color:#d0d0d0"> class=</span><span style="color:#e2787a">&#x27;content&#x27;</span><span style="color:#5aa0dc">&gt;</span></div><div class="ln" style="left:594px;top:417.56px;color:#404040">14</div><svg width="1" height="1" style="left:649px;top:425.36px"><path d="M-5 -2.5 L0 2.5 L5 -2.5" fill="none" stroke="#c8c8c8" stroke-width="1.2"/></svg><div class="code" style="left:725.04px;top:417.56px"><span style="color:#5aa0dc">&lt;view</span><span style="color:#d0d0d0"> class=</span><span style="color:#e2787a">&#x27;text-gray&#x27;</span><span style="color:#5aa0dc">&gt;</span></div><div class="ln" style="left:594px;top:438.20px;color:#404040">15</div><div class="code" style="left:740.20px;top:438.20px"><span style="color:#5aa0dc">&lt;text</span><span style="color:#d0d0d0"> class=</span><span style="color:#d8d8d8">&quot;</span><span style="color:#e2787a">icon-upstagefill text-yellow</span><span style="color:#d8d8d8">&quot;</span><span style="color:#5aa0dc">&gt;&lt;/text&gt;</span><span style="color:#d8d8d8"> <span class="cj">第</span></span><span style="color:#5aa0dc">&lt;text</span><span style="color:#d0d0d0"> class=</span><span style="color:#d8d8d8">&quot;</span><span style="color:#e2787a">text-yellow text-xl</span><span style="color:#d8d8d8">&quot;</span><span style="color:#5aa0dc">&gt;</span><span style="color:#d8d8d8">1</span><span style="color:#5aa0dc">&lt;/</span></div><div class="code" style="left:740.20px;top:458.84px"><span style="color:#5aa0dc">text&gt;</span><span style="color:#d8d8d8"><span class="cj">名</span></span></div><div class="ln" style="left:594px;top:479.48px;color:#404040">16</div><div class="code" style="left:725.04px;top:479.48px"><span style="color:#5aa0dc">&lt;/view&gt;</span></div><div class="ln" style="left:594px;top:500.12px;color:#404040">17</div><div class="code" style="left:725.04px;top:500.12px"><span style="color:#5aa0dc">&lt;view</span><span style="color:#d0d0d0"> class=</span><span style="color:#e2787a">&#x27;text-sm text-grey&#x27;</span><span style="color:#5aa0dc">&gt;</span><span style="color:#d8d8d8">meng674782630</span><span style="color:#5aa0dc">&lt;/view&gt;</span></div><div class="ln" style="left:594px;top:520.76px;color:#404040">18</div><div class="code" style="left:709.88px;top:520.76px"><span style="color:#5aa0dc">&lt;/view&gt;</span></div><div class="ln" style="left:594px;top:541.40px;color:#404040">19</div><svg width="1" height="1" style="left:649px;top:549.20px"><path d="M-5 -2.5 L0 2.5 L5 -2.5" fill="none" stroke="#c8c8c8" stroke-width="1.2"/></svg><div class="code" style="left:709.88px;top:541.40px"><span style="color:#5aa0dc">&lt;view</span><span style="color:#d0d0d0"> class=</span><span style="color:#e2787a">&#x27;action&#x27;</span><span style="color:#5aa0dc">&gt;</span></div><div class="ln" style="left:594px;top:562.04px;color:#404040">20</div><div class="code" style="left:725.04px;top:562.04px"><span style="color:#5aa0dc">&lt;view</span><span style="color:#d0d0d0"> class=</span><span style="color:#e2787a">&#x27;text-xl text-yellow&#x27;</span><span style="color:#5aa0dc">&gt;</span><span style="color:#d8d8d8">100<span class="cj">分</span></span><span style="color:#5aa0dc">&lt;/view&gt;</span></div><div class="ln" style="left:594px;top:582.68px;color:#404040">21</div><div class="code" style="left:709.88px;top:582.68px"><span style="color:#5aa0dc">&lt;/view&gt;</span></div><div class="ln" style="left:594px;top:603.32px;color:#404040">22</div><div class="code" style="left:694.72px;top:603.32px"><span style="color:#5aa0dc">&lt;/view&gt;</span></div><div class="ln" style="left:594px;top:623.96px;color:#404040">23</div><div class="code" style="left:679.56px;top:623.96px"><span style="color:#5aa0dc">&lt;/view&gt;</span></div><div class="ln" style="left:594px;top:644.60px;color:#404040">24</div><div class="code" style="left:664.40px;top:644.60px"><span style="color:#5aa0dc">&lt;/view&gt;</span></div><div class="a" style="left:1096.5px;top:129px;width:1.5px;height:18px;background:#d0d0d0"></div><div class="a" style="left:664.4px;top:129px;width:7.6px;height:17px;border:1px solid #6a7a6a;border-top:none;border-right:none"></div><div class="a" style="left:1088.9px;top:129px;width:8.6px;height:18px;border:1px solid #8a9a8a"></div><div class="a" style="left:652px;top:126px;width:763px;height:166px;border:3px solid #f0ec3a;box-shadow:0 0 1px 1px rgba(0,0,0,0.45)"></div><div class="a" style="left:655px;top:311px;width:770px;height:364px;border:3px solid #d42020;box-shadow:0 0 0 1px rgba(110,10,10,0.7)"></div><div class="a" style="left:1257px;top:668px;font-size:17px;letter-spacing:1px;line-height:22px;color:rgba(225,225,225,0.58);white-space:nowrap">@稀土掘金技术社区</div></body></html>
